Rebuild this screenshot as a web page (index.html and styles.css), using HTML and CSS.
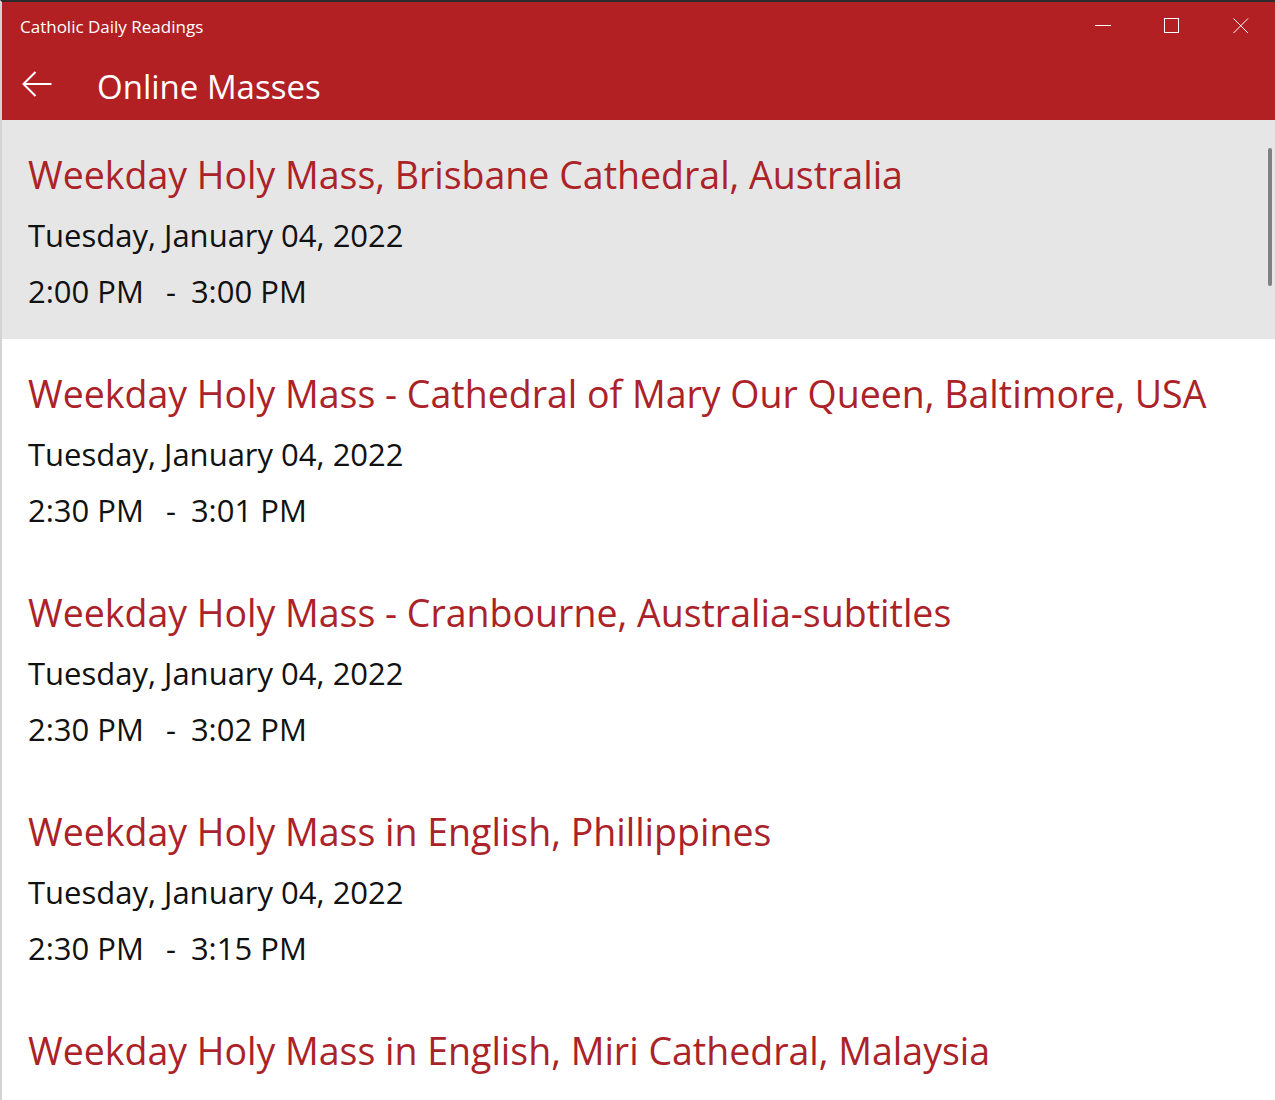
FILE: index.html
```html
<!DOCTYPE html>
<html lang="en">
<head>
  <meta charset="UTF-8">
  <title>Online Masses</title>
  <link rel="stylesheet" href="styles.css">
</head>
<body>
  <div class="window">
    <div class="titlebar">
      <span class="app-name">Catholic Daily Readings</span>
      <div class="caption-buttons">
        <button class="caption-btn" aria-label="Minimize">
          <svg width="16" height="16" viewBox="0 0 16 16"><path d="M0 7.5h16" stroke="#fff" stroke-width="1"/></svg>
        </button>
        <button class="caption-btn" aria-label="Maximize">
          <svg width="16" height="16" viewBox="0 0 16 16"><rect x="0.5" y="0.5" width="14" height="14" fill="none" stroke="#fff" stroke-width="1"/></svg>
        </button>
        <button class="caption-btn" aria-label="Close">
          <svg width="16" height="16" viewBox="0 0 16 16"><path d="M0.5 0.5l14.5 14.5M15 0.5L0.5 15" stroke="#fff" stroke-width="1"/></svg>
        </button>
      </div>
    </div>
    <div class="header">
      <button class="back-btn" aria-label="Back">
        <svg width="30" height="26" viewBox="0 0 30 26"><path d="M1.5 13h28M13.5 1L1.5 13l12 12" fill="none" stroke="#fff" stroke-width="2"/></svg>
      </button>
      <h1 class="page-title">Online Masses</h1>
    </div>
    <div class="content">
      <ul class="mass-list">
        <li class="mass-item selected">
          <div class="mass-title">Weekday Holy Mass, Brisbane Cathedral, Australia</div>
          <div class="mass-date">Tuesday, January 04, 2022</div>
          <div class="mass-time"><span>2:00 PM</span><span class="dash">-</span><span>3:00 PM</span></div>
        </li>
        <li class="mass-item">
          <div class="mass-title">Weekday Holy Mass - Cathedral of Mary Our Queen, Baltimore, USA</div>
          <div class="mass-date">Tuesday, January 04, 2022</div>
          <div class="mass-time"><span>2:30 PM</span><span class="dash">-</span><span>3:01 PM</span></div>
        </li>
        <li class="mass-item">
          <div class="mass-title">Weekday Holy Mass - Cranbourne, Australia-subtitles</div>
          <div class="mass-date">Tuesday, January 04, 2022</div>
          <div class="mass-time"><span>2:30 PM</span><span class="dash">-</span><span>3:02 PM</span></div>
        </li>
        <li class="mass-item">
          <div class="mass-title">Weekday Holy Mass in English, Phillippines</div>
          <div class="mass-date">Tuesday, January 04, 2022</div>
          <div class="mass-time"><span>2:30 PM</span><span class="dash">-</span><span>3:15 PM</span></div>
        </li>
        <li class="mass-item">
          <div class="mass-title">Weekday Holy Mass in English, Miri Cathedral, Malaysia</div>
          <div class="mass-date">Tuesday, January 04, 2022</div>
          <div class="mass-time"><span>2:30 PM</span><span class="dash">-</span><span>3:30 PM</span></div>
        </li>
      </ul>
      <div class="scrollbar"></div>
    </div>
  </div>
</body>
</html>
```

FILE: styles.css
```css
html, body {
  margin: 0;
  padding: 0;
  height: 100%;
  overflow: hidden;
}
body {
  font-family: "Open Sans", "Noto Sans", sans-serif;
  background: #fff;
}
.window {
  height: 1100px;
  border-top: 2px solid #2b2b2b;
  border-left: 2px solid #d4d4d4;
  box-sizing: border-box;
  display: flex;
  flex-direction: column;
}
.titlebar {
  height: 50px;
  background-color: #b22024;
  display: flex;
  align-items: center;
  justify-content: space-between;
  color: #fff;
}
.app-name {
  font-size: 17px;
  padding-left: 18px;
  margin-top: -2px;
}
.caption-buttons {
  display: flex;
  align-self: flex-start;
}
.caption-btn {
  width: 69px;
  height: 48px;
  border: none;
  background: transparent;
  padding: 0;
  display: flex;
  align-items: center;
  justify-content: center;
}
.header {
  height: 68px;
  background-color: #b22024;
  display: flex;
  align-items: center;
}
.back-btn {
  border: none;
  background: transparent;
  padding: 0;
  margin-left: 20px;
  margin-top: -4px;
  width: 30px;
  height: 26px;
}
.page-title {
  margin: 0 0 0 45px;
  font-size: 33px;
  font-weight: normal;
  color: #fff;
}
.content {
  flex: 1;
  position: relative;
  overflow: hidden;
}
.mass-list {
  list-style: none;
  margin: 0;
  padding: 0;
}
.mass-item {
  height: 219px;
  padding: 30px 26px 0;
  box-sizing: border-box;
}
.mass-item.selected {
  background-color: #e6e6e6;
}
.mass-title {
  color: #ab2228;
  font-size: 37.5px;
  line-height: 50px;
  white-space: nowrap;
}
.mass-date,
.mass-time {
  color: #111;
  font-size: 31px;
  line-height: 56px;
  white-space: nowrap;
}
.mass-date {
  margin-top: 7px;
}
.mass-time {
  display: flex;
}
.dash {
  margin: 0 15px 0 22px;
}
.scrollbar {
  position: absolute;
  top: 28px;
  right: 3px;
  width: 4px;
  height: 138px;
  border-radius: 2px;
  background-color: #808080;
}
```
